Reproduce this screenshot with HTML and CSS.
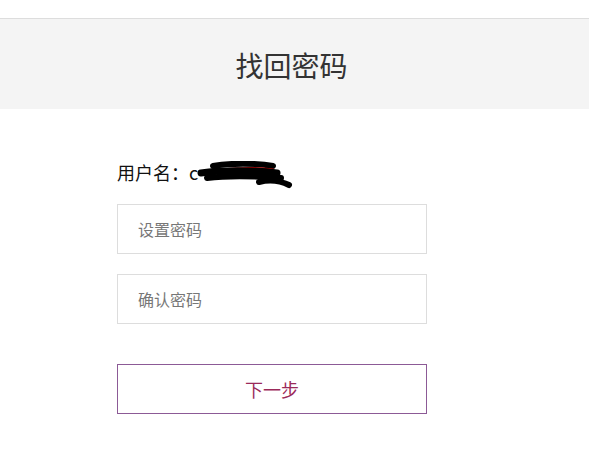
FILE: index.html
```html
<!DOCTYPE html>
<html lang="zh-CN">
<head>
    <meta charset="UTF-8">
    <meta name="viewport" content="width=device-width, initial-scale=1.0">
    <title>找回密码</title>
    <link rel="stylesheet" href="styles.css">
</head>
<body>
    <div class="page">
        <div class="header">
            <h1 class="title">找回密码</h1>
        </div>
        <div class="form">
            <div class="username">
                用户名：c<span class="redact"><svg xmlns="http://www.w3.org/2000/svg" viewBox="0 0 96 28" width="96" height="28">
                    <path d="M16 5 C32 2 60 2 76 5" stroke="#000" stroke-width="6" fill="none" stroke-linecap="round"/>
                    <path d="M24 9 C42 7 62 7 76 9" stroke="#b00" stroke-width="3" fill="none" stroke-linecap="round"/>
                    <path d="M4 12 C24 9 56 9 80 12" stroke="#000" stroke-width="7" fill="none" stroke-linecap="round"/>
                    <path d="M10 17 C34 14 58 15 84 17" stroke="#000" stroke-width="6" fill="none" stroke-linecap="round"/>
                    <path d="M62 21 C70 19 82 19 92 24" stroke="#000" stroke-width="6" fill="none" stroke-linecap="round"/>
                </svg></span>
            </div>
            <input class="field" type="password" placeholder="设置密码">
            <input class="field" type="password" placeholder="确认密码">
            <button class="next">下一步</button>
        </div>
    </div>
</body>
</html>
```

FILE: styles.css
```css
* {
    margin: 0;
    padding: 0;
    box-sizing: border-box;
    font-family: "Noto Sans CJK SC", "Microsoft YaHei", sans-serif;
}

body {
    background: #ffffff;
    color: #333333;
}

.page {
    padding-top: 18px;
}

.header {
    height: 91px;
    border-top: 1px solid #dddddd;
    background: #f4f4f4;
    display: flex;
    align-items: center;
    justify-content: center;
}

.header .title {
    font-size: 28px;
    font-weight: 400;
    color: #333333;
    padding-top: 2px;
    margin-left: -6px;
}

.form {
    padding: 48px 0 0 117px;
    display: flex;
    flex-direction: column;
    align-items: flex-start;
}

.username {
    font-size: 18px;
    color: #111111;
    height: 30px;
    display: flex;
    align-items: center;
    margin-bottom: 17px;
}

.username .redact {
    display: inline-block;
    width: 96px;
    height: 28px;
    margin-left: -1px;
    margin-top: 6px;
}

.username .redact svg {
    display: block;
}

.field {
    width: 310px;
    height: 50px;
    border: 1px solid #dddddd;
    padding: 0 20px;
    font-size: 16px;
    color: #333333;
    outline: none;
    margin-bottom: 20px;
}

.field::placeholder {
    color: #777777;
}

.next {
    width: 310px;
    height: 50px;
    margin-top: 20px;
    background: #ffffff;
    border: 1px solid #8c5a96;
    color: #9b2a5a;
    font-size: 18px;
    cursor: pointer;
}
```
